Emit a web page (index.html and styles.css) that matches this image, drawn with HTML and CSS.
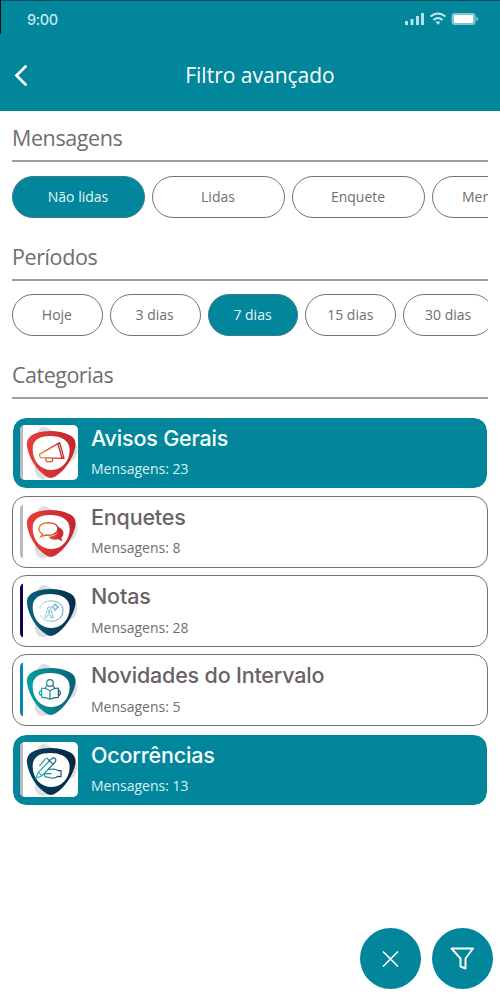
FILE: index.html
```html
<!DOCTYPE html>
<html lang="pt-BR">
<head>
<meta charset="utf-8">
<title>Filtro avançado</title>
<link rel="stylesheet" href="styles.css">
</head>
<body>
<svg class="defs" aria-hidden="true">
  <defs>
    <linearGradient id="red"><stop offset="0" stop-color="#e5403a"/><stop offset="1" stop-color="#c5242c"/></linearGradient>
    <linearGradient id="navy"><stop offset="0" stop-color="#08647c"/><stop offset="1" stop-color="#062b4b"/></linearGradient>
    <linearGradient id="teal"><stop offset="0" stop-color="#08a0a5"/><stop offset="1" stop-color="#075e79"/></linearGradient>
    <linearGradient id="night"><stop offset="0" stop-color="#06405a"/><stop offset="1" stop-color="#052642"/></linearGradient>
    <linearGradient id="warm" gradientUnits="userSpaceOnUse" x1="88" y1="0" x2="150" y2="0"><stop offset="0" stop-color="#ec8a30"/><stop offset="1" stop-color="#cf2834"/></linearGradient>
    <linearGradient id="cool" gradientUnits="userSpaceOnUse" x1="80" y1="0" x2="165" y2="0"><stop offset="0" stop-color="#25bfb0"/><stop offset="1" stop-color="#123c62"/></linearGradient>
    <linearGradient id="sky" gradientUnits="userSpaceOnUse" x1="90" y1="0" x2="160" y2="0"><stop offset="0" stop-color="#a5e0dd"/><stop offset="1" stop-color="#1789b5"/></linearGradient>
    <g id="shadow"><path fill="#dcdee1" d="M82 54Q97 27 118 41L199 87Q211 107 196 132L112 190Q82 200 76 165Z"/></g>
    <path id="shield" d="M53 94C50 72 64 60 80 55C110 45 152 46 180 60C196 68 201 80 198 96C191 130 168 165 139 184Q124 194 110 184C80 165 58 127 53 94Z"/>
    <path id="face" fill="#fff" d="M70 104C69 74 92 63 122 63C154 63 181 75 181 105C181 140 156 165 128 165C93 165 71 138 70 104Z"/>
  </defs>
</svg>
<header class="header">
  <div class="status">
    <span class="time">9:00</span>
    <svg class="signals" viewBox="0 0 75 16" width="75" height="16">
      <g fill="#b5e0e7"><path d="M0 10h3v4H0zM5.500 8h3v6h-3zM11 5h3v9h-3zM16 2h3v12h-3z"/></g>
      <g fill="none" stroke="#c5e8ed" stroke-width="2"><path d="M25.500 5.500Q33 -.5 40.500 5.500M28.500 9Q33 5 37.500 9"/></g>
      <path d="M30.500 10.500h5L33 14z" fill="#c5e8ed"/>
      <rect x="46.500" y="2" width="24" height="12" rx="3" fill="#7fc4d0"/><rect x="49" y="4" width="19" height="8" rx="1" fill="#fff"/><path d="M71.500 5.500q3 2.500 0 5z" fill="#a5d7df"/>
    </svg>
  </div>
  <div class="titlebar">
    <svg class="back" viewBox="0 0 14 22" width="14" height="22"><path d="M11.500 2.500L2.500 11.500L11.500 20.500" fill="none" stroke="#fff" stroke-width="2.800" stroke-linecap="round"/></svg>
    <h1 class="title">Filtro avançado</h1>
  </div>
</header>
<main class="content">
  <section class="section">
    <h2 class="heading">Mensagens</h2>
    <div class="chips wide">
      <span class="chip on">Não lidas</span><span class="chip">Lidas</span><span class="chip">Enquete</span><span class="chip">Mensagem</span>
    </div>
  </section>
  <section class="section">
    <h2 class="heading">Períodos</h2>
    <div class="chips narrow">
      <span class="chip">Hoje</span><span class="chip">3 dias</span><span class="chip on">7 dias</span><span class="chip">15 dias</span><span class="chip">30 dias</span>
    </div>
  </section>
  <section class="section">
    <h2 class="heading last">Categorias</h2>
    <div class="cards">
      <article class="card on">
        <svg class="icon" viewBox="32 30 174 165"><path d="M32 30h9v165h-9z" fill="#b8babd"/><use href="#shadow"/><use href="#shield" fill="url(#red)"/><use href="#face"/>
          <g fill="none" stroke="url(#warm)" stroke-width="4" stroke-linejoin="round"><path d="M90 118L151 83L164 130L93 128ZM146 87L158 129M108 129L112 140H128L131 130"/></g></svg>
        <div class="info"><h3 class="name">Avisos Gerais</h3><p class="count">Mensagens: 23</p></div>
      </article>
      <article class="card">
        <svg class="icon" viewBox="32 30 174 165"><path d="M32 30h9v165h-9z" fill="#b8babd"/><use href="#shadow"/><use href="#shield" fill="url(#red)"/><use href="#face"/>
          <path d="M145 99C163 102 168 122 156 131L159 142L146 136C133 139 121 135 117 128C137 128 151 119 145 99Z" fill="url(#warm)"/>
          <path d="M117 86C99 86 89 94 89 105C89 112 94 117 100 120L95 128L109 123C131 127 146 117 146 104C146 93 134 86 117 86Z" fill="#fff" stroke="url(#warm)" stroke-width="4.500"/></svg>
        <div class="info"><h3 class="name">Enquetes</h3><p class="count">Mensagens: 8</p></div>
      </article>
      <article class="card">
        <svg class="icon" viewBox="32 30 174 165"><path d="M41 30v165q-9-2-9-10V40q0-8 9-10z" fill="#130052"/><use href="#shadow"/><use href="#shield" fill="url(#navy)"/><use href="#face"/>
          <g fill="none" stroke="url(#sky)"><path stroke-width="2.500" d="M92 108C90 92 110 82 130 84C153 86 164 101 160 119C156 140 137 147 118 144C103 142 95 133 93 126"/><path stroke-width="2.500" stroke-linejoin="round" d="M106 134L116 102H122L132 134H125L123 126H114L112 134ZM116 120H121L119 110ZM135 93H140V100H147V105H140V112H135V105H128V100H135Z"/></g></svg>
        <div class="info"><h3 class="name">Notas</h3><p class="count">Mensagens: 28</p></div>
      </article>
      <article class="card">
        <svg class="icon" viewBox="32 30 174 165"><path d="M41 30v165q-9-2-9-10V40q0-8 9-10z" fill="#0786b0"/><use href="#shadow"/><use href="#shield" fill="url(#teal)"/><use href="#face"/>
          <g fill="none" stroke="url(#cool)" stroke-width="3.500" stroke-linejoin="round"><circle cx="122" cy="93" r="10"/><path d="M113 101L106 111M131 101L138 111M97 108Q112 108 122 116Q132 108 147 108V136Q132 136 122 142Q112 136 97 136ZM122 116V142M97 116Q89 117 90 124Q90 130 97 130M147 116Q154 117 153 124Q153 130 147 130"/></g></svg>
        <div class="info"><h3 class="name">Novidades do Intervalo</h3><p class="count">Mensagens: 5</p></div>
      </article>
      <article class="card on">
        <svg class="icon" viewBox="32 30 174 165"><path d="M32 30h9v165h-9z" fill="#b8babd"/><use href="#shadow"/><use href="#shield" fill="url(#night)"/><use href="#face"/>
          <g fill="none" stroke="url(#cool)" stroke-width="3.500" stroke-linejoin="round" stroke-linecap="round"><path d="M80 139L87 121L126 81Q135 74 139 82Q141 87 135 93L98 131ZM87 121L98 131M118 85L131 96M108 81L91 101M112 78L119 84M104 125H125M116 113L132 111Q140 111 146 116H155V134L144 133Q139 139 127 138L107 134M104 125L107 134"/></g></svg>
        <div class="info"><h3 class="name">Ocorrências</h3><p class="count">Mensagens: 13</p></div>
      </article>
    </div>
  </section>
</main>
<div class="actions">
  <button class="fab" aria-label="Limpar"><svg viewBox="0 0 61 61" width="61" height="61"><path d="M23.500 24L37.500 38M37.500 24L23.500 38" stroke="#fff" stroke-width="1.700" stroke-linecap="round"/></svg></button>
  <button class="fab" aria-label="Filtrar"><svg viewBox="0 0 61 61" width="61" height="61"><path d="M19.500 20.500H41L33.500 30.500V40.500L28.500 38.500V30.500Z" fill="none" stroke="#fff" stroke-width="1.900" stroke-linejoin="round"/></svg></button>
</div>
</body>
</html>
```
FILE: styles.css
```css
* { box-sizing: border-box; }
body { margin: 0; width: 500px; height: 1000px; overflow: hidden; background: #fff; color: #716d70; font-family: "Open Sans", "Noto Sans", sans-serif; position: relative; }
h1, h2, h3, p { margin: 0; font-weight: 400; }
.defs { position: absolute; width: 0; height: 0; }
.header { height: 111px; background: #02869b; border-top: 1px solid #064f5c; color: #fff; }
.status { height: 38px; padding: 0 20px 2px 27px; display: flex; justify-content: space-between; align-items: center; }
.status::before { content: ""; position: absolute; left: 0; top: 0; width: 1px; height: 34px; background: #111; }
.time { font: 500 14.500px Inter, sans-serif; letter-spacing: -.4px; color: #c5e8ed; }
.signals { display: block; }
.titlebar { height: 72px; display: grid; grid-template-columns: 14px 1fr 14px; align-items: center; padding: 0 14px; }
.title { text-align: center; font-size: 21px; line-height: 30px; margin-right: -20px; }
.content { padding: 0 12px; }
.section { height: 118.500px; }
.heading { height: 51px; border-bottom: 2px solid #a09fa0; padding-top: 12px; font-size: 21.500px; letter-spacing: -.4px; line-height: 30px; }
.last { letter-spacing: -.5px; }
.chips { display: flex; overflow: hidden; padding-top: 13.500px; gap: 7px; }
.chip { flex: none; height: 42px; border: 1.500px solid #767375; border-radius: 21px; display: flex; align-items: center; justify-content: center; font-size: 14px; padding: 0 1px 1px 0; }
.wide .chip { width: 133px; }
.narrow .chip { width: 90.800px; }
.chip.on { background: #02869b; color: #e2f6f8; border-color: #3b7b88; }
.cards { display: grid; gap: 7.300px; padding-top: 17.500px; }
.card { height: 72px; border: 1.500px solid #767375; border-radius: 14px; display: flex; padding: 7px; gap: 13px; }
.card.on { background: #02869b; color: #fff; border-color: #fff; background-clip: padding-box; }
.icon { display: block; width: 58px; height: 55px; border-radius: 5px; background: #fff; flex: none; }
.name { font: 500 21.500px/26px Inter, sans-serif; letter-spacing: -.18px; white-space: nowrap; color: #676366; }
.on .name { color: #f5ffff; }
.count { font-size: 14px; line-height: 20px; margin-top: 8.600px; }
.on .count { color: #d9f2f5; }
.actions { position: absolute; right: 7px; bottom: 11px; display: flex; gap: 11px; }
.fab { width: 61px; height: 61px; border: 0; border-radius: 50%; background: #02869b; padding: 0; }
.fab svg { display: block; }
```
